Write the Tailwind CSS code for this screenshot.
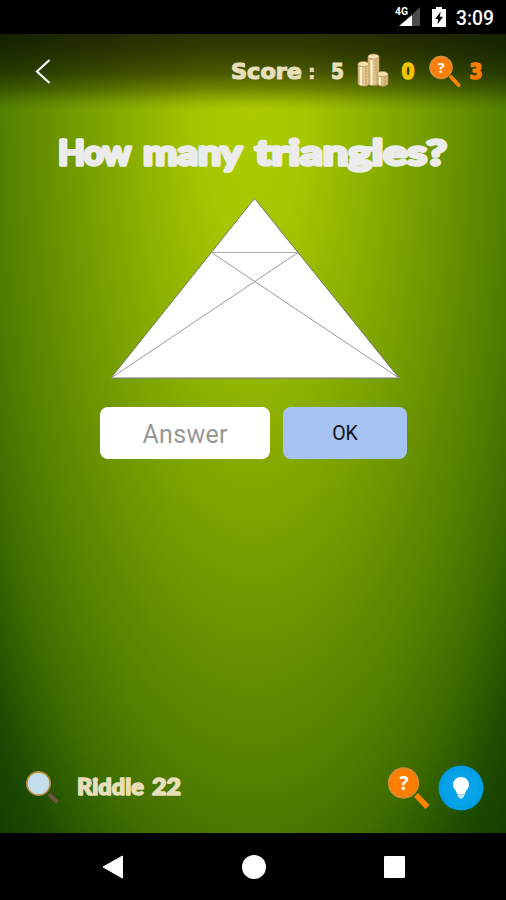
<!DOCTYPE html>
<html lang="en">
<head>
<meta charset="utf-8">
<meta name="viewport" content="width=device-width, initial-scale=1">
<title>Riddle 22</title>
<script src="https://cdn.jsdelivr.net/npm/@tailwindcss/browser@4"></script>
</head>
<body class="bg-black">
<div class="w-[506px] h-[900px] flex flex-col overflow-hidden bg-black font-['Roboto','Liberation_Sans',sans-serif]">
  <!-- status bar -->
  <header class="h-[34px] shrink-0 flex items-center justify-end pr-[11px] text-white">
    <svg class="w-[28px] h-[22px] mr-[10px]" viewBox="0 0 28 22">
      <path d="M26 1V20H7Z" fill="#4b4b4b"/><path d="M18 9V20H5Z" fill="#fff"/>
      <text x="1" y="8.500" font-size="10" font-weight="700" fill="#fff" textLength="13" lengthAdjust="spacingAndGlyphs">4G</text>
    </svg>
    <svg class="w-[14px] h-[22px] mr-[10px]" viewBox="0 0 14 22">
      <path d="M4 1h6v2h4v18H0V3h4Z" fill="#fff"/><path d="M8.700 5.500 3.200 13h3l-.7 5.300L11 10.800H7.800Z" fill="#000"/>
    </svg>
    <svg class="w-[39px] h-[22px]" viewBox="0 0 39 22"><text x="0" y="18.500" font-size="20" font-weight="500" fill="#fff" textLength="38" lengthAdjust="spacingAndGlyphs">3:09</text></svg>
  </header>

  <main class="h-[799px] shrink-0 flex flex-col bg-[radial-gradient(266px_720px_at_50%_66px,#accb00_0%,#a5c600_20%,#8bb000_45%,#6f9800_70%,#517e00_97%,#3f6d00_110%,#1d4b00_128%,#113a00_143%)]">
    <!-- toolbar -->
    <div class="h-[76px] shrink-0 flex items-center bg-[linear-gradient(to_bottom,rgba(0,0,0,.75),rgba(0,0,0,.68)_25%,rgba(0,0,0,.55)_52%,rgba(0,0,0,.33)_73%,rgba(0,0,0,.1)_89%,transparent)]">
      <svg class="w-[18px] h-[28px] ml-[34px] -mt-[3px]" viewBox="0 0 18 28"><path d="M15.500 3 3 14.500 15.500 26" fill="none" stroke="#fff" stroke-width="2.200"/></svg>
      <svg class="w-[117px] h-[30px] ml-[177px] -mt-[2px]" viewBox="0 0 117 30" font-family="DejaVu Sans,sans-serif" font-weight="700" fill="#e6dfba" stroke="#e6dfba" stroke-width="1.200" stroke-linejoin="round">
        <text x="2" y="22.500" font-size="22" textLength="71" lengthAdjust="spacingAndGlyphs">Score</text>
        <text x="79" y="22.500" font-size="19" stroke-width=".5">:</text>
        <text x="102" y="22.500" font-size="22" textLength="13" lengthAdjust="spacingAndGlyphs">5</text>
      </svg>
      <svg class="w-[32px] h-[36px] ml-[11px] -mt-[4px]" viewBox="0 0 32 36">
        <g stroke="#b58d4c" stroke-width=".7">
          <path d="M11 5v27c2 2 9 2 11 0V5Z" fill="#ddc188"/><ellipse cx="16.500" cy="4.500" rx="5.500" ry="2.500" fill="#f4e2b0"/>
          <path d="M1 12v20c2 3 9 3 11 0V12Z" fill="#e0c48c"/><ellipse cx="6.500" cy="12" rx="5.500" ry="2.500" fill="#f4e2b0"/>
          <path d="M20 22v10c2 3 9 3 11 0V22Z" fill="#d9bb7c"/><ellipse cx="25.500" cy="22" rx="5.500" ry="2.500" fill="#f4e2b0"/>
        </g>
        <path d="M4 15v18M14.500 8v25M23 25v8" stroke="#fff1c8" stroke-width="2"/>
        <path d="M9 15v18M19 8v13M28 25v8" stroke="#c39d5c" stroke-width="1.300" stroke-dasharray="2 1"/>
      </svg>
      <svg class="w-[16px] h-[30px] ml-[11px] -mt-[2px]" viewBox="0 0 16 30"><text x="1.500" y="22.500" font-family="DejaVu Sans,sans-serif" font-weight="700" font-size="22" fill="#f2c500" stroke="#f2c500" stroke-width="1.600" stroke-linejoin="round" textLength="13" lengthAdjust="spacingAndGlyphs">0</text></svg>
      <svg class="w-[34px] h-[34px] ml-[12px] -mt-[3px]" viewBox="0 0 34 34">
        <path d="m23 23 7.500 8" stroke="#ff8100" stroke-width="4" stroke-linecap="round"/>
        <circle cx="13" cy="13.500" r="11" fill="#ff7d08" stroke="#d79137" stroke-width="1.500"/>
        <text x="13" y="18.500" text-anchor="middle" font-family="Open Sans,sans-serif" font-weight="700" font-size="15" fill="#fff">?</text>
      </svg>
      <svg class="w-[16px] h-[30px] ml-[6px] -mt-[2px]" viewBox="0 0 16 30"><text x="1.500" y="22.500" font-family="DejaVu Sans,sans-serif" font-weight="700" font-size="22" fill="#ff7d00" stroke="#ff7d00" stroke-width="1.600" stroke-linejoin="round" textLength="13" lengthAdjust="spacingAndGlyphs">3</text></svg>
    </div>

    <!-- question -->
    <svg class="w-[400px] h-[50px] mt-[20px] ml-[53px] shrink-0" viewBox="0 0 400 50" font-family="Lato,sans-serif" font-weight="700" font-size="35" fill="#ececec" stroke="#ececec" stroke-width="3.400" stroke-linejoin="round">
      <text x="5" y="35" textLength="73" lengthAdjust="spacing">How</text>
      <text x="90" y="35" textLength="99" lengthAdjust="spacingAndGlyphs">many</text>
      <text x="202" y="35" textLength="192" lengthAdjust="spacingAndGlyphs">triangles?</text>
    </svg>
    <svg class="w-[292px] h-[186px] mt-[16px] ml-[109px] shrink-0" viewBox="0 0 292 186" fill="none" stroke="#777" stroke-width="1">
      <path d="M145.500 2.500 2 182H290Z" fill="#fff"/>
      <path d="M102.500 56.500H189" stroke="#aaa"/><path d="M2 182 189 56.500M290 182 102.500 56.500" stroke="#999"/>
    </svg>

    <form class="flex gap-[13px] ml-[100px] mt-[25px] shrink-0">
      <div class="w-[170px] h-[52px] rounded-[8px] bg-white flex items-center justify-center">
        <svg class="w-[88px] h-[34px]" viewBox="0 0 88 34"><text x="1.500" y="26.500" font-size="25" fill="#979797" textLength="85" lengthAdjust="spacing">Answer</text></svg>
      </div>
      <button type="button" class="w-[124px] h-[52px] rounded-[8px] bg-[#a6c3f3] flex items-center justify-center text-[19.5px] text-[#111]"><span class="pt-[1px]">OK</span></button>
    </form>

    <!-- footer -->
    <div class="mt-auto h-[90px] shrink-0 flex items-center">
      <svg class="w-[36px] h-[36px] ml-[25px]" viewBox="0 0 36 36">
        <path d="m24 24 8.500 8.500" stroke="#70553d" stroke-width="4"/><circle cx="13.500" cy="13.500" r="11.700" fill="#c5deed" stroke="#b48b2e" stroke-width="1.700"/>
      </svg>
      <svg class="w-[112px] h-[30px] ml-[13px] -mt-[2px]" viewBox="0 0 112 30" font-family="Lato,sans-serif" font-weight="900" font-size="22.500" fill="#e6dfba" stroke="#e6dfba" stroke-width="1.500" stroke-linejoin="round">
        <text x="3" y="22.500" textLength="67" lengthAdjust="spacingAndGlyphs">Riddle</text>
        <text x="78" y="22.500" textLength="29" lengthAdjust="spacingAndGlyphs">22</text>
      </svg>
      <svg class="w-[44px] h-[44px] ml-[201px]" viewBox="0 0 44 44">
        <path d="m29 29 11.500 12" stroke="#ff8100" stroke-width="5.500"/><circle cx="16.500" cy="17" r="14.800" fill="#ff7d00" stroke="#d18b32" stroke-width="1.800"/>
        <text x="17" y="23.500" text-anchor="middle" font-family="Open Sans,sans-serif" font-weight="700" font-size="19" fill="#fff">?</text>
      </svg>
      <svg class="w-[46px] h-[46px] ml-[7px]" viewBox="0 0 46 46">
        <circle cx="23" cy="23" r="22.500" fill="#009ee5"/><circle cx="23" cy="23" r="18" fill="#07a3e9"/>
        <path d="M23 12c-4.500 0-8 3.300-8 7.600 0 4.400 3.500 5.500 4 9.400h8c.5-3.900 4-5 4-9.400 0-4.300-3.500-7.600-8-7.600Z" fill="#fff"/>
        <path d="M19.500 30h7M20 31.500h6M21.500 33h3" stroke="#c4e5f5" stroke-width="1.600"/>
      </svg>
    </div>
  </main>

  <!-- system navigation -->
  <nav class="h-[67px] shrink-0 flex items-center">
    <svg class="w-[24px] h-[26px] ml-[101px]" viewBox="0 0 24 26"><path d="M21.500 2v22L2 13Z" fill="#fff" stroke="#fff" stroke-linejoin="round"/></svg>
    <div class="size-[24px] rounded-full bg-white ml-[117px]"></div>
    <div class="w-[21px] h-[22px] rounded-[1px] bg-white ml-[118px]"></div>
  </nav>
</div>
</body>
</html>
